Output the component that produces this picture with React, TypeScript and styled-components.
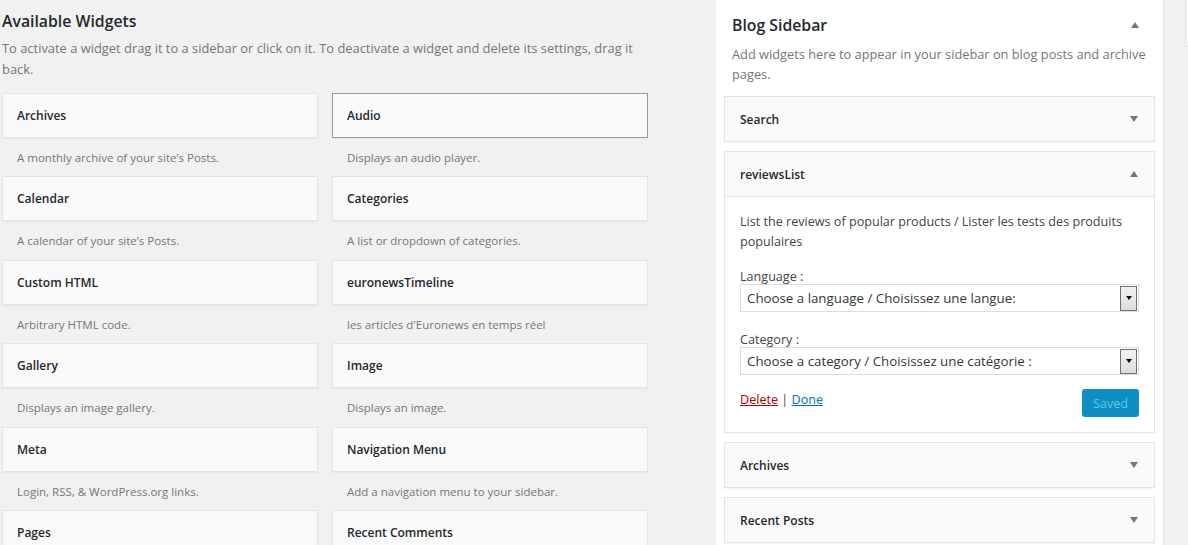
import React from "react";
import styled, { createGlobalStyle } from "styled-components";

const Global = createGlobalStyle`
  html, body { margin: 0; padding: 0; background: #f1f1f1; overflow: hidden; }
  body { font-family: "Open Sans", "Noto Sans", sans-serif; color: #23282d; }
  * { box-sizing: border-box; }
`;

const Page = styled.div`
  display: flex;
  align-items: flex-start;
  padding-left: 2px;
  height: 545px;
  overflow: hidden;
`;

const Left = styled.div`
  width: 714px;
  flex-shrink: 0;
`;

const Title = styled.h2`
  margin: 0;
  padding-top: 10px;
  font-size: 15.8px;
  line-height: 22px;
  font-weight: 600;
  color: #23282d;
`;

const Intro = styled.p`
  margin: 6px 0 13px;
  width: 644px;
  font-size: 12.9px;
  line-height: 21px;
  color: #72777c;
`;

const Grid = styled.div`
  display: grid;
  grid-template-columns: 316px 316px;
  column-gap: 14px;
`;

const Item = styled.div``;

const Card = styled.div<{ $active?: boolean }>`
  height: 45px;
  display: flex;
  align-items: center;
  padding: 0 14px;
  background: #fafafa;
  border: 1px solid ${(p) => (p.$active ? "#999" : "#e5e5e5")};
  box-shadow: 0 1px 1px rgba(0, 0, 0, 0.04);
  font-size: 12px;
  font-weight: 600;
  color: #23282d;
`;

const Desc = styled.div`
  height: 38.4px;
  padding: 12px 15px 0;
  font-size: 11.5px;
  line-height: 16px;
  color: #72777c;
`;

const Sidebar = styled.div`
  width: 448px;
  flex-shrink: 0;
  background: #fff;
  border-right: 1px solid #e5e5e5;
  padding: 0 8px;
  min-height: 545px;
`;

const SideHead = styled.div`
  display: flex;
  align-items: center;
  justify-content: space-between;
  padding: 14px 16px 0 8px;
`;

const SideTitle = styled.h2`
  margin: 0;
  font-size: 15.8px;
  line-height: 22px;
  font-weight: 600;
  color: #23282d;
`;

const SideDesc = styled.p`
  margin: 8px 0 0;
  padding: 0 8px;
  font-size: 12.8px;
  line-height: 20px;
  color: #72777c;
`;

const WidgetList = styled.div`
  display: flex;
  flex-direction: column;
  gap: 9px;
  margin-top: 12px;
`;

const Widget = styled.div`
  border: 1px solid #e5e5e5;
  box-shadow: 0 1px 1px rgba(0, 0, 0, 0.04);
  background: #fafafa;
`;

const WidgetHead = styled.div`
  height: 44px;
  display: flex;
  align-items: center;
  justify-content: space-between;
  padding: 0 16px 0 15px;
  font-size: 12px;
  font-weight: 600;
  color: #23282d;
`;

const Arrow = styled.span<{ $up?: boolean }>`
  width: 0;
  height: 0;
  border-left: 4.5px solid transparent;
  border-right: 4.5px solid transparent;
  ${(p) =>
    p.$up
      ? "border-bottom: 6px solid #72777c;"
      : "border-top: 6px solid #72777c;"}
`;

const WidgetBody = styled.div`
  background: #fff;
  border-top: 1px solid #e5e5e5;
  padding: 15px 15px 15px;
  font-size: 12.6px;
  color: #444;
`;

const BodyText = styled.p`
  margin: 0 0 17px;
  line-height: 20px;
`;

const Field = styled.div`
  margin-bottom: 20px;
`;

const Label = styled.div`
  line-height: 15px;
`;

const Select = styled.div`
  height: 28px;
  display: flex;
  align-items: center;
  border: 1px solid #ddd;
  background: #fff;
  padding: 1px 1px 1px 6px;
  color: #32373c;
  font-size: 13.3px;
`;

const SelectText = styled.span`
  flex: 1;
`;

const SelectBtn = styled.span`
  width: 17px;
  height: 25px;
  border: 1px solid #707070;
  background: linear-gradient(#f2f2f2, #dcdcdc);
  display: flex;
  align-items: center;
  justify-content: center;
  &::after {
    content: "";
    border-left: 3.5px solid transparent;
    border-right: 3.5px solid transparent;
    border-top: 4px solid #000;
  }
`;

const Actions = styled.div`
  display: flex;
  align-items: center;
  justify-content: space-between;
  margin-top: -6px;
`;

const Links = styled.div`
  color: #444;
  margin-top: -7px;
`;

const Link = styled.a<{ $danger?: boolean }>`
  color: ${(p) => (p.$danger ? "#a00" : "#0073aa")};
  text-decoration: underline;
`;

const SaveButton = styled.button`
  width: 57px;
  height: 28px;
  border: none;
  border-radius: 3px;
  background: #0e8ec2;
  color: #66c6e4;
  font-family: inherit;
  font-size: 12.6px;
  padding: 0;
`;

const Edge = styled.div`
  margin-left: 21px;
  width: 10px;
  height: 47px;
  background: #f9f9f9;
  border-left: 1px solid #e2e2e2;
  border-bottom: 1px solid #e2e2e2;
`;

const left = [
  ["Archives", "A monthly archive of your site’s Posts."],
  ["Audio", "Displays an audio player."],
  ["Calendar", "A calendar of your site’s Posts."],
  ["Categories", "A list or dropdown of categories."],
  ["Custom HTML", "Arbitrary HTML code."],
  ["euronewsTimeline", "les articles d'Euronews en temps réel"],
  ["Gallery", "Displays an image gallery."],
  ["Image", "Displays an image."],
  ["Meta", "Login, RSS, & WordPress.org links."],
  ["Navigation Menu", "Add a navigation menu to your sidebar."],
  ["Pages", ""],
  ["Recent Comments", ""],
];

export default function App() {
  return (
    <>
      <Global />
      <Page>
        <Left>
          <Title>Available Widgets</Title>
          <Intro>
            To activate a widget drag it to a sidebar or click on it. To deactivate a widget and
            delete its settings, drag it back.
          </Intro>
          <Grid>
            {left.map(([name, desc]) => (
              <Item key={name}>
                <Card $active={name === "Audio"}>{name}</Card>
                <Desc>{desc}</Desc>
              </Item>
            ))}
          </Grid>
        </Left>
        <Sidebar>
          <SideHead>
            <SideTitle>Blog Sidebar</SideTitle>
            <Arrow $up />
          </SideHead>
          <SideDesc>Add widgets here to appear in your sidebar on blog posts and archive pages.</SideDesc>
          <WidgetList>
            <Widget>
              <WidgetHead>
                Search
                <Arrow />
              </WidgetHead>
            </Widget>
            <Widget>
              <WidgetHead>
                reviewsList
                <Arrow $up />
              </WidgetHead>
              <WidgetBody>
                <BodyText>
                  List the reviews of popular products / Lister les tests des produits populaires
                </BodyText>
                <Field>
                  <Label>Language :</Label>
                  <Select>
                    <SelectText>Choose a language / Choisissez une langue:</SelectText>
                    <SelectBtn />
                  </Select>
                </Field>
                <Field>
                  <Label>Category :</Label>
                  <Select>
                    <SelectText>Choose a category / Choisissez une catégorie :</SelectText>
                    <SelectBtn />
                  </Select>
                </Field>
                <Actions>
                  <Links>
                    <Link $danger>Delete</Link> | <Link>Done</Link>
                  </Links>
                  <SaveButton>Saved</SaveButton>
                </Actions>
              </WidgetBody>
            </Widget>
            <Widget>
              <WidgetHead>
                Archives
                <Arrow />
              </WidgetHead>
            </Widget>
            <Widget>
              <WidgetHead>
                Recent Posts
                <Arrow />
              </WidgetHead>
            </Widget>
          </WidgetList>
        </Sidebar>
        <Edge />
      </Page>
    </>
  );
}
